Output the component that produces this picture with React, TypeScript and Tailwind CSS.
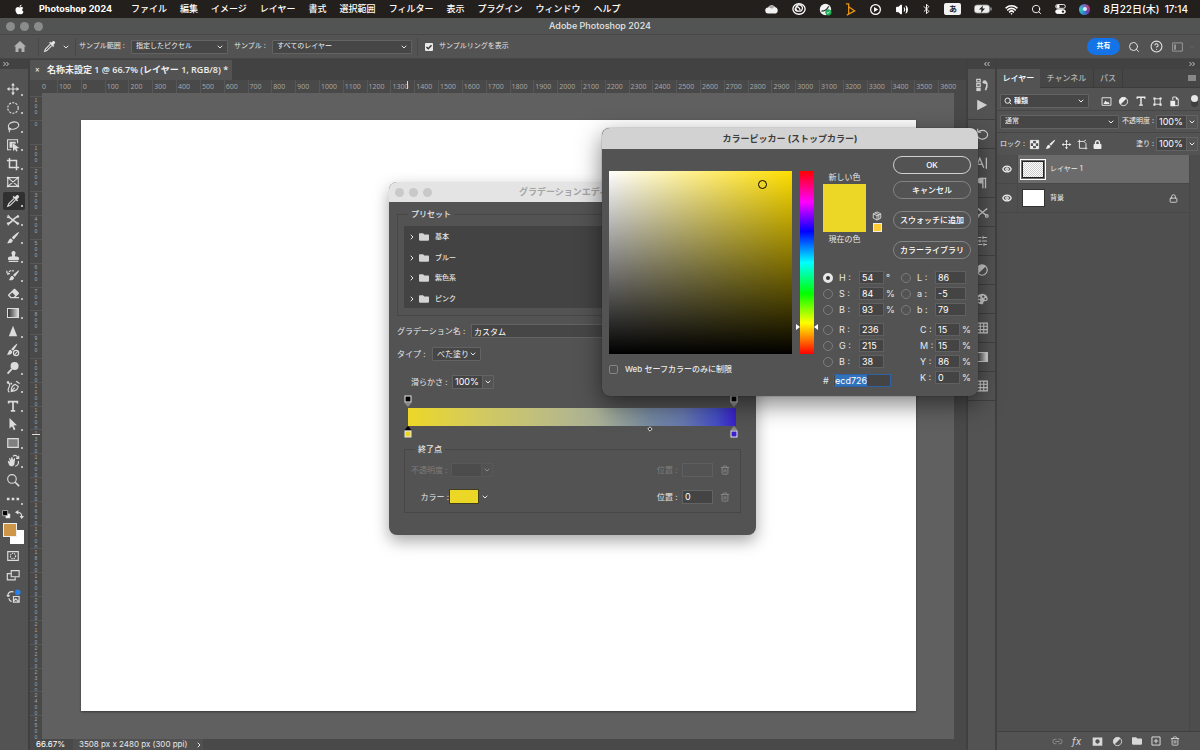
import React, { useEffect, useRef } from 'react';
import {
  Bluetooth,
  ChevronDown,
  ChevronRight,
  CircleHelp,
  Eye,
  Link2,
  Lock,
  Search,
  SlidersHorizontal,
  Trash2,
  Volume2,
  Wifi,
} from 'lucide-react';
import { FaApple, FaFolder, FaStamp, FaEraser, FaLock } from 'react-icons/fa';

const menus = [
  'ファイル',
  '編集',
  'イメージ',
  'レイヤー',
  '書式',
  '選択範囲',
  'フィルター',
  '表示',
  'プラグイン',
  'ウィンドウ',
  'ヘルプ',
];

const topTicks = [100, ...Array.from({ length: 37 }, (_, i) => i * 100)];
const sideTicks = [100, ...Array.from({ length: 26 }, (_, i) => i * 100)];
const presets = ['基本', 'ブルー', '紫色系', 'ピンク'];

interface GlyphProps {
  children: React.ReactNode;
  className?: string;
}

// Stroke icon on a 16 unit grid
function Glyph({ children, className = 'w-[14px] h-[14px]' }: GlyphProps) {
  return (
    <svg viewBox="0 0 16 16" className={`shrink-0 ${className}`} fill="none" stroke="currentColor" strokeWidth="1.3" aria-hidden="true">
      {children}
    </svg>
  );
}

const MoveIcon = ({ className }: { className?: string }) => (
  <Glyph className={className}>
    <path d="M8 2v12M2 8h12" />
    <path d="M8 1 5.800 4h4.400zM8 15l-2.200-3h4.400zM1 8l3-2.200v4.400zM15 8l-3-2.200v4.400z" fill="currentColor" stroke="none" />
  </Glyph>
);

const PipetteIcon = ({ className }: { className?: string }) => (
  <Glyph className={className}>
    <path d="M9 5.200 3 11.200 2 14l2.800-1 6-6" />
    <path d="M7.500 3.300 12.700 8.500l1.200-1.200-1.200-1.200 1.800-1.900c1.500-1.500-1-4.100-2.600-2.600L10 3.400 8.700 2.100z" fill="currentColor" stroke="none" />
  </Glyph>
);

const BrushIcon = ({ className }: { className?: string }) => (
  <Glyph className={className}>
    <path d="M14.800 1.200c.6.6-4.200 6.900-6 8.500L6.600 7.600C8.300 5.600 14.200.6 14.800 1.200zM5.700 8.500l2.100 2.100C7.800 13.500 4 14.800 1 13.700c2-.6 1.600-5 4.700-5.200z" fill="currentColor" stroke="none" />
  </Glyph>
);

const HalfCircleIcon = ({ className }: { className?: string }) => (
  <Glyph className={className}>
    <circle cx="8" cy="8" r="6" />
    <path d="M3.700 12.300A6 6 0 0 1 12.300 3.700z" fill="currentColor" stroke="none" />
  </Glyph>
);

const TypeIcon = ({ className }: { className?: string }) => (
  <Glyph className={className}>
    <path d="M3 5V3h10v2M8 3v10.500M5.500 13.500h5" strokeWidth="1.900" />
  </Glyph>
);

const FrameIcon = ({ className }: { className?: string }) => (
  <Glyph className={className}>
    <path d="M4 4h8v8H4z" />
    <path d="M2 2h3v3H2zM11 2h3v3h-3zM2 11h3v3H2zM11 11h3v3h-3z" fill="currentColor" stroke="none" />
  </Glyph>
);

const tools = [
  { name: '移動', icon: <MoveIcon />, more: true },
  { name: '楕円形選択', icon: <Glyph><circle cx="8" cy="8" r="6" strokeDasharray="2.400 1.400" /></Glyph>, more: true },
  {
    name: 'なげなわ',
    icon: <Glyph><ellipse cx="8.500" cy="6.500" rx="6" ry="4" transform="rotate(-14 8 6)" /><path d="M3.800 9.200c-1.600 1-.6 2.600.8 1.800 1.300-.9-.4-2.300-1-1.200M4 11c.5 1 .3 2-.5 3" /></Glyph>,
    more: true,
  },
  {
    name: 'オブジェクト選択',
    icon: <Glyph><path d="M6 13.500H1.800V2h11.400v4" strokeWidth="1.200" /><path d="M4 4.200h7v2.600L7.500 5.600V11H4zM8 6l7.200 5.400-3.200.5 1.300 3-1.700.6-1.300-3L8 15z" fill="currentColor" stroke="none" /></Glyph>,
    more: true,
  },
  { name: '切り抜き', icon: <Glyph><path d="M4 1v11h11M1 4h11v11" strokeWidth="1.700" /></Glyph>, more: true },
  { name: 'フレーム', icon: <Glyph><path d="M2 3h12v10H2zM2 3l12 10M14 3 2 13" /><path d="M1 2h2v2H1zM13 2h2v2h-2zM1 12h2v2H1zM13 12h2v2h-2z" fill="currentColor" stroke="none" /></Glyph>, more: false },
  { name: 'スポイト', icon: <PipetteIcon />, more: true },
  {
    name: 'スポット修復',
    icon: <Glyph><path d="M1 4.500c3 0 4 1 7 3.500s4 4 7 4M1 12c4 0 5-1.500 7-4s4-4 7-4" strokeWidth="1.800" /><path d="M2 2.500 4.500 5M11.500 11l2.500 2.500M2 14l2.500-3M11.500 5.500 14 2.500" strokeWidth="1.400" /></Glyph>,
    more: true,
  },
  { name: 'ブラシ', icon: <BrushIcon />, more: true },
  { name: 'コピースタンプ', icon: <FaStamp className="w-[11px] h-[11px]" />, more: true },
  { name: 'ヒストリーブラシ', icon: <Glyph><path d="M15 2.500c.5.500-3.500 6-5 7.500l-2-2c1.500-1.600 6.500-6 7-5.500zM7.200 8.800l2 2c0 2.700-3.200 4-6.200 3 1.900-.6 1.500-4.800 4.200-5z" fill="currentColor" stroke="none" /><path d="M2 8c0-4.500 4-6 7-4.500M1 3v3.500h3.500" strokeDasharray="3 1" /></Glyph>, more: true },
  { name: '消しゴム', icon: <FaEraser className="w-[11px] h-[11px]" />, more: true },
  { name: 'グラデーション', icon: <span className="w-3 h-[10px] border border-[#dcdcdc] bg-linear-to-r from-[#3a3a3a] to-[#d8d8d8]" />, more: true },
  { name: 'シャープ', icon: <Glyph><path d="M8 2 12.800 14H3.200z" fill="currentColor" stroke="none" /></Glyph>, more: true },
  { name: '調整ブラシ', icon: <Glyph><path d="M13 .8c.5.5-3.500 6.500-5 8L6 7C7.500 5 12.500.3 13 .8zM5.200 7.800l2 2C7.200 13 4 14 1 13c1.900-.6 1.500-5 4.200-5.200z" fill="currentColor" stroke="none" /><circle cx="11.500" cy="11.500" r="3" /><path d="m9.500 13.500 4-4" /></Glyph>, more: false },
  { name: '覆い焼き', icon: <Glyph><circle cx="9.800" cy="5.800" r="4.600" fill="currentColor" stroke="none" /><path d="M6.500 9.300 1.800 14.500" strokeWidth="2" /></Glyph>, more: true },
  {
    name: 'ペン',
    icon: <Glyph><path d="M6 13c0-4 1.500-7 4.500-8l3.500 2.500c-.5 3-3 5-8 5.500zM6 13l4-4.200M11.500 1.500 15.500 4M2 3c2 1 3 2 1.500 5S2 13 4 14" /><path d="M1 1.500h2.500V4H1zM5 3h2v2H5z" fill="currentColor" stroke="none" /></Glyph>,
    more: true,
  },
  { name: '文字', icon: <TypeIcon />, more: true },
  { name: 'パス選択', icon: <Glyph><path d="M4 1l8.500 8.500-3.800.3 2.100 4.300-1.900.9-2-4.400L4 13z" fill="currentColor" stroke="none" /></Glyph>, more: true },
  { name: '長方形', icon: <Glyph><path d="M2 3h12v10H2z" fill="#808080" /></Glyph>, more: true },
  {
    name: '手のひら',
    icon: <Glyph><path d="M2 8.500c1-1 2 0 2.500 1L3.500 5c.8-1 1.600 0 2 2L6 4c1-.8 1.700 0 1.700 1l.3 2 1-2c1-.5 1.600.3 1.300 1.300L9.500 12c-1 2.500-4.500 2.800-6 .5z" fill="currentColor" stroke="none" /><path d="M8 2.500c3-2 5.500 0 5 2.500M14 8c1 3-1 5.500-3.500 6M11.500 5H14.500V2" /></Glyph>,
    more: true,
  },
  { name: 'ズーム', icon: <Glyph><circle cx="6.800" cy="6.800" r="4.900" /><path d="m10.500 10.500 4.500 4.500" strokeWidth="1.800" /></Glyph>, more: false },
  { name: 'ツールバーを編集', icon: <Glyph><path d="M1 6.500h3v3H1zM6.500 6.500h3v3h-3zM12 6.500h3v3h-3z" fill="currentColor" stroke="none" /></Glyph>, more: true },
];

interface DropProps {
  label: string;
  value: string;
  className?: string;
  selectClass?: string;
}

// Native select with the chevron laid in the same grid cell
function Drop({ label, value, className = '', selectClass = 'pl-1' }: DropProps) {
  return (
    <span className={`grid items-center bg-[#464646] border border-[#636363] rounded-[1px] ${className}`}>
      <select aria-label={label} defaultValue={value} className={`[grid-area:1/1] h-full w-full appearance-none outline-none text-[#f0f0f0] ${selectClass}`}>
        <option value={value}>{value}</option>
      </select>
      <ChevronDown className="[grid-area:1/1] justify-self-end mr-[3px] w-2 h-2 pointer-events-none" strokeWidth={3} />
    </span>
  );
}

function PercentBox({ label, value, disabled = false }: { label: string; value: string; disabled?: boolean }) {
  return (
    <span className={`flex h-[14px] ${disabled ? 'opacity-40' : ''}`}>
      <input aria-label={label} defaultValue={value} disabled={disabled} className="w-[31px] px-[2px] border border-[#636363] bg-[#444] text-[9px] text-white outline-none" />
      <button type="button" aria-label={`${label}を変更`} disabled={disabled} className="w-[11px] flex items-center justify-center border border-l-0 border-[#636363]">
        <ChevronDown className="w-2 h-2" strokeWidth={3} />
      </button>
    </span>
  );
}

function MenuBar() {
  return (
    <header className="h-[18px] shrink-0 bg-[#231f1d] text-white flex items-center justify-between pl-[14px] pr-3 text-[9px] font-medium">
      <div className="flex items-center">
        <FaApple className="w-[11px] h-[11px]" />
        <span className="ml-[14px] w-[77px] font-bold">Photoshop 2024</span>
        <nav className="ml-[15px] flex gap-[13px] whitespace-nowrap">
          {menus.map((menu) => (
            <button key={menu} type="button">{menu}</button>
          ))}
        </nav>
      </div>
      <div className="flex items-center gap-[13px]">
        <svg viewBox="0 0 28 20" className="w-[14px] h-[10px]" aria-hidden="true">
          <path d="M7 19a6 6 0 0 1-1-12 8 8 0 0 1 14-1 7 7 0 0 1 2 13z" fill="#f2f2f2" />
          <path d="M6 7a8 8 0 0 1 14-1c-3 0-5 2-6 4-2-2-5-3-8-3z" fill="#aaa" />
        </svg>
        <Glyph>
          <ellipse cx="8" cy="8" rx="7" ry="6" strokeWidth="1.500" />
          <path d="M10.500 10.500H6A2.400 2.400 0 1 1 7.800 6.500L9.500 9M6.500 10.500A3.800 3.800 0 1 1 9.800 10.500" strokeWidth="1.400" />
        </Glyph>
        <svg viewBox="0 0 16 16" className="w-[13px] h-[13px]" aria-hidden="true">
          <circle cx="8" cy="8" r="7" fill="#f4f4f4" />
          <circle cx="11.500" cy="11.500" r="3.800" fill="#1fae54" />
          <path d="M3 10c4 0 7-2 9-6" stroke="#333" strokeWidth="1.500" fill="none" />
          <path d="m9.800 11.500 1.300 1.300 2.200-2.400" stroke="#fff" fill="none" />
        </svg>
        <svg viewBox="0 0 11 14" className="w-[11px] h-[13px]" fill="none" stroke="#e8930c" strokeWidth="1.400" aria-hidden="true">
          <path d="M.5 1h3v11M3.500 4l6.500 4.500L1.500 13M3.500 12V7" />
        </svg>
        <Glyph className="w-[13px] h-[13px]">
          <circle cx="8" cy="8" r="6" strokeWidth="1.500" />
          <path d="M6.200 5v6l5-3z" fill="currentColor" stroke="none" />
        </Glyph>
        <Volume2 className="w-[14px] h-[13px] fill-white" strokeWidth={2} />
        <Bluetooth className="w-[9px] h-3 scale-125" strokeWidth={2} />
        <span className="w-[17px] h-3 rounded-[2px] bg-[#f2f2f2] text-[#222] text-[8px] leading-3 text-center font-bold">あ</span>
        <svg viewBox="0 0 36 20" className="w-[18px] h-[10px]" aria-hidden="true">
          <rect x="1" y="2" width="30" height="16" rx="5" fill="#eee" stroke="#999" strokeWidth="1.500" />
          <path d="M34 7v6" stroke="#aaa" strokeWidth="2.500" />
          <path d="m18 3-8 8h5l-1 7 8-9h-5z" fill="#231f1d" />
        </svg>
        <Wifi className="w-[13px] h-[13px]" strokeWidth={3} />
        <Search className="w-[11px] h-[11px]" strokeWidth={2} />
        <Glyph className="w-[11px] h-[12px]">
          <rect x="1" y="1.500" width="14" height="5.500" rx="2.700" />
          <rect x="1" y="9" width="14" height="5.500" rx="2.700" fill="currentColor" />
          <circle cx="4.500" cy="4.200" r="2.300" fill="currentColor" stroke="none" />
          <circle cx="11.500" cy="11.800" r="1.700" fill="#231f1d" stroke="none" />
        </Glyph>
        <span className="w-[11px] h-[11px] rounded-full bg-[conic-gradient(from_200deg,#2a8fd0,#39c0b8,#5d7ad8,#c23a7b,#6a3fb0,#2a8fd0)] flex items-center justify-center">
          <span className="w-1 h-1 rounded-full bg-[#d8ecff]" />
        </span>
        <time className="text-[10px] whitespace-nowrap">8月22日(木)&nbsp; 17:14</time>
      </div>
    </header>
  );
}

function OptionsBar() {
  return (
    <div className="h-6 shrink-0 flex items-center pl-[14px] pr-1 border-b border-[#464646] text-[7px] text-[#e4e4e4] whitespace-nowrap">
      <button type="button" aria-label="ホーム">
        <svg viewBox="0 0 24 22" className="w-3 h-[11px] fill-[#b0b0b0]" aria-hidden="true">
          <path d="M12 0 24 11h-3v11h-6v-7H9v7H3V11H0z" />
        </svg>
      </button>
      <div className="ml-3 h-[18px] border-l border-r border-[#484848] flex items-center pl-1 pr-[5px] gap-[6px]">
        <PipetteIcon className="w-[13px] h-[13px]" />
        <ChevronDown className="w-2 h-2" strokeWidth={3} />
      </div>
      <span className="ml-[3px] w-12">サンプル範囲 :</span>
      <Drop label="サンプル範囲" value="指定したピクセル" className="ml-1 w-[97px] h-[14px]" />
      <span className="ml-[6px] w-[34px]">サンプル :</span>
      <Drop label="サンプル" value="すべてのレイヤー" className="ml-1 w-[140px] h-[14px]" />
      <label className="ml-[5px] h-[18px] border-l border-[#484848] pl-[7px] flex items-center gap-[6px]">
        <span className="grid">
          <input type="checkbox" defaultChecked className="[grid-area:1/1] appearance-none w-2 h-2 rounded-[1px] bg-[#e8e8e8]" />
          <Glyph className="[grid-area:1/1] w-2 h-2 text-[#333] pointer-events-none">
            <path d="m3 8 3.500 3.500L13 4.500" strokeWidth="2.800" />
          </Glyph>
        </span>
        サンプルリングを表示
      </label>
      <div className="ml-auto flex items-center">
        <button type="button" className="w-[33px] h-[17px] rounded-full bg-[#1473e6] text-white font-bold">共有</button>
        <button type="button" aria-label="検索" className="ml-2"><Search className="w-3 h-3" /></button>
        <button type="button" aria-label="ヘルプ" className="ml-[10px]"><CircleHelp className="w-[13px] h-[13px]" /></button>
        <button type="button" aria-label="ワークスペース" className="ml-2 flex items-center gap-1 text-[#999]">
          <Glyph className="w-[13px] h-3">
            <path d="M1.500 2.500h13v11h-13z" />
            <path d="M3.500 4.500h2.500v7H3.500z" fill="currentColor" stroke="none" />
          </Glyph>
          <ChevronDown className="w-2 h-2 text-[#6a6a6a]" />
        </button>
      </div>
    </div>
  );
}

function Collapse({ left = false }: { left?: boolean }) {
  return (
    <svg viewBox="0 0 12 8" className={`w-[6px] h-1 ${left ? 'rotate-180' : ''}`} fill="none" stroke="#c8c8c8" strokeWidth="2" aria-hidden="true">
      <path d="m1 0 4 4-4 4M7 0l4 4-4 4" />
    </svg>
  );
}

function Toolbar() {
  return (
    <aside className="w-[30px] shrink-0 border-r-2 border-[#404040] flex flex-col">
      <div className="h-[10px] shrink-0 bg-[#424242] pl-[3px] flex items-center"><Collapse /></div>
      <div className="pt-[11px] flex flex-col text-[#dcdcdc]">
        <div className="h-[428px] grid auto-rows-fr">
          {tools.map((tool) => (
            <button
              key={tool.name}
              type="button"
              title={tool.name}
              className={`mx-[3px] flex items-center rounded-[2px] pl-[3px] ${tool.name === 'スポイト' ? 'bg-[#303030]' : ''}`}
            >
              <span className="w-[14px] flex justify-center">{tool.icon}</span>
              {tool.more && <span className="self-end ml-px mb-[3px] w-[2px] h-[2px] bg-[#bbb]" />}
            </button>
          ))}
        </div>
        <div className="h-[13px] flex items-center justify-between pl-[2px] pr-1">
          <Glyph className="w-[9px] h-[9px]">
            <path d="M7 7h7v7H7z" fill="#fff" />
            <path d="M1 1h9v9H1z" fill="#000" stroke="#ccc" />
          </Glyph>
          <Glyph className="w-[9px] h-[9px]">
            <path d="M4 4c6 0 8 2 8 8" strokeWidth="2" />
            <path d="M0 4 6 0v8zM12 16 8 10.500h8z" fill="currentColor" stroke="none" />
          </Glyph>
        </div>
        {/* Foreground and background colors */}
        <div className="h-[23px] pl-[3px] pt-[2px] grid grid-cols-[7px_7px_7px] grid-rows-[7px_7px_7px]">
          <span className="col-start-2 col-span-2 row-start-2 row-span-2 bg-white" />
          <span className="col-start-1 col-span-2 row-start-1 row-span-2 bg-[#cd9648] border border-[#eee]" />
        </div>
        <div className="pt-[5px] pl-[6px] flex flex-col">
          <Glyph>
            <path d="M2 3h12v10H2z" />
            <circle cx="8" cy="8" r="3" strokeDasharray="1.500 1" />
          </Glyph>
          <Glyph className="mt-[5px] w-[14px] h-[14px]">
            <path d="M6 3h9v7H6z" />
            <path d="M5.500 6.500H1.500v7h9V10.500" />
          </Glyph>
          <Glyph className="mt-[7px] w-[15px] h-[15px]">
            <path d="M8 3C4 2 1.500 4.500 2 8l-1-1.500M2 8l2-1M3 10c.5 2 1.500 3 3 3.500M8 8h6v6H8zM8 13l2.500-2.500L14 14" />
            <circle cx="12.500" cy="3.500" r="3" fill="#2680eb" stroke="none" />
          </Glyph>
        </div>
      </div>
    </aside>
  );
}

function DocumentArea() {
  return (
    <main className="flex-1 min-w-0 flex flex-col">
      <div className="h-[21px] shrink-0 bg-[#424242] flex">
        <div className="w-[202px] h-5 mt-px bg-[#535353] flex items-center pl-[5px] text-[9px] leading-3 font-semibold text-[#efefef] whitespace-nowrap font-['Open_Sans','Noto_Sans_CJK_JP',sans-serif]">
          <button type="button" aria-label="閉じる" className="w-3 text-left text-[8px] leading-3">×</button>
          名称未設定 1 @ 66.7% (レイヤー 1, RGB/8) *
        </div>
      </div>
      <div className="relative h-[13px] shrink-0 flex bg-[#494949] text-[7px] leading-[13px] text-[#a8a8a8] font-['Open_Sans',sans-serif] overflow-hidden">
        <span className="w-3 shrink-0" />
        <span className="w-[15px] shrink-0">0</span>
        <div className="flex-1 grid grid-flow-col auto-cols-fr">
          {topTicks.map((tick, i) => (
            <span key={i} className="border-l border-[#575757] pl-px whitespace-nowrap">{tick}</span>
          ))}
        </div>
        <span className="w-1 shrink-0" />
        <span className="absolute left-[377px] top-px w-px h-2 bg-[#ddd]" />
      </div>
      <div className="flex-1 min-h-0 flex bg-[#494949]">
        <div className="relative w-3 shrink-0 pt-[3px] grid auto-rows-fr text-[5px] leading-[6px] text-[#a8a8a8] font-['Liberation_Sans',sans-serif]">
          {sideTicks.map((tick, i) => (
            <span key={i} className="min-h-0 pl-[3px] border-t border-[#575757] whitespace-nowrap [writing-mode:vertical-lr] [text-orientation:upright]">
              {tick}
            </span>
          ))}
          <span className="absolute left-[2px] top-[341px] w-2 h-px bg-[#ddd]" />
        </div>
        <div className="flex-1 bg-[#606060] pt-[27px] pb-7 pl-[39px] pr-[38px] flex">
          <div className="flex-1 bg-white shadow-[0_1px_2px_#3a3a3a]" />
        </div>
        <div className="w-3 shrink-0" />
      </div>
      <footer className="h-[11px] shrink-0 bg-[#494949] flex items-center text-[8px] leading-[11px] text-[#e6e6e6] whitespace-nowrap">
        <span className="w-[43px] pl-[6px] text-white">66.67%</span>
        <span className="bg-[#505050] w-[130px] pl-[6px] flex items-center justify-between">
          3508 px x 2480 px (300 ppi)
          <ChevronRight className="w-2 h-2" strokeWidth={3} />
        </span>
      </footer>
    </main>
  );
}

const GridIcon = () => (
  <Glyph><path d="M2 2.500h12v11H2zM6 2.500v11M10 2.500v11M2 6h12M2 9.800h12" /></Glyph>
);

const dock = [
  [
    <Glyph key="history"><path d="M2 1.500h4v3H2zM2 6.500h4v3H2z" /><path d="M1.500 11h5v4h-5z" fill="currentColor" stroke="none" /><path d="M9 4c5-1 6 4 3 10" strokeWidth="1.800" /><path d="M8 5.500 12 2l.5 5z" fill="currentColor" stroke="none" /></Glyph>,
    <Glyph key="actions"><path d="M2.500 2v12L14 8z" fill="currentColor" stroke="none" /></Glyph>,
  ],
  [<Glyph key="clone"><path d="M3 2v4h4M3.500 6a6 5 0 1 1-.5 5" /></Glyph>],
  [
    <Glyph key="char"><path d="M1 13.500 5.500 2.500 10 13.500M2.600 9.500h5.800M13 2v12.500" strokeWidth="1.500" /></Glyph>,
    <Glyph key="para"><path d="M9 14V2.500M12 14V2.500M13 2.700H6" strokeWidth="1.500" /><path d="M9 2H6a3 3 0 0 0 0 6.500h3z" fill="currentColor" stroke="none" /></Glyph>,
  ],
  [<Glyph key="tools"><path d="m2 3 11 9M14 4 4 12" strokeWidth="1.700" /><circle cx="3" cy="12.500" r="1.500" /><circle cx="13.500" cy="12.500" r="1.500" /></Glyph>],
  [<SlidersHorizontal key="props" className="w-3 h-3" />],
  [<HalfCircleIcon key="adjust" />],
  [
    <Glyph key="color">
      <path
        d="M8 2a6.500 6 0 1 0 0 12c2 0 1-2 2-3s4.500 0 4.500-3C14.500 4.500 11.500 2 8 2zM5 5.500a1.300 1.300 0 1 0 .01 0zM9.500 4a1.300 1.300 0 1 0 .01 0zM4.800 9.200a1.300 1.300 0 1 0 .01 0zM12 6.800a1.200 1.200 0 1 0 .01 0z"
        fill="currentColor"
        fillRule="evenodd"
        stroke="none"
      />
    </Glyph>,
  ],
  [<GridIcon key="swatches" />],
  [<span key="gradients" className="w-3 h-[10px] border border-[#ccc] bg-linear-to-r from-[#444] to-[#ddd]" />],
  [<GridIcon key="patterns" />],
];

function Dock() {
  return (
    <aside className="w-[31px] shrink-0 bg-[#404040] px-[2px] text-[#cfcfcf]">
      <div className="h-[10px] bg-[#424242] flex items-center justify-end pr-[5px]"><Collapse left /></div>
      <div className="h-full bg-[#535353] pt-[2px]">
        {dock.map((group, i) => (
          <div key={i} className={`flex flex-col items-center justify-center gap-[6px] border-b border-[#404040] ${group.length > 1 ? 'h-[49px]' : 'h-[29px]'}`}>
            {group}
          </div>
        ))}
      </div>
    </aside>
  );
}

interface LayerRowProps {
  name: string;
  selected?: boolean;
  locked?: boolean;
  children: React.ReactNode;
}

function LayerRow({ name, selected = false, locked = false, children }: LayerRowProps) {
  return (
    <li className="h-[29px] flex border-b border-[#484848]">
      <button type="button" aria-label="表示" className="w-[21px] flex items-center justify-center border-r border-[#484848]">
        <Eye className="w-[10px] h-[10px]" strokeWidth={3} />
      </button>
      <div className={`flex-1 flex items-center pl-[2px] pr-[11px] ${selected ? 'bg-[#6b6b6b]' : ''}`}>
        <span className="w-[26px] mr-1 flex justify-center">{children}</span>
        {name}
        {locked && <Lock className="ml-auto w-[9px] h-[9px]" />}
      </div>
    </li>
  );
}

function LayersPanel() {
  return (
    <aside className="w-[203px] shrink-0 flex flex-col text-[7px] text-[#ededed] whitespace-nowrap">
      <div className="h-[10px] bg-[#424242] flex items-center justify-end pr-[5px]"><Collapse /></div>
      <div className="h-[19px] bg-[#464646] flex text-[8px] leading-[10px] font-medium text-[#b4b4b4]">
        <button type="button" className="w-[43px] pb-px bg-[#535353] text-white">レイヤー</button>
        <button type="button" className="w-[54px] border-r border-b border-[#3c3c3c]">チャンネル</button>
        <button type="button" className="w-[29px] border-r border-b border-[#3c3c3c]">パス</button>
        <span className="flex-1 border-b border-[#3c3c3c] flex items-center justify-end pr-1">
          <span className="w-2 h-[6px] bg-[#888]" />
        </span>
      </div>
      <div className="h-[23px] border-b border-[#464646] flex items-center pt-1 pl-[3px] pr-[2px]">
        <span className="grid items-center">
          <Drop label="種類" value="種類" className="[grid-area:1/1] w-[89px] h-[14px] font-bold" selectClass="pl-[13px]" />
          <Search className="[grid-area:1/1] ml-1 w-2 h-2 pointer-events-none" strokeWidth={3} />
        </span>
        <div className="flex-1 flex items-center justify-between pl-3 pr-[11px]">
          <Glyph className="w-[11px] h-[11px]">
            <path d="M1.500 2.500h13v11h-13z" />
            <path d="m3.500 11.500 3-5 2.500 3 1.500-1.500 2 3.500z" fill="currentColor" stroke="none" />
          </Glyph>
          <HalfCircleIcon className="w-[11px] h-[11px]" />
          <TypeIcon className="w-3 h-3" />
          <FrameIcon className="w-[11px] h-[11px]" />
          <Glyph className="w-[11px] h-[11px]">
            <path d="M5.500 6V1.500h5l3 3v9.500H8" />
            <path d="M2 7h7v8H2zM10 1v4h4z" fill="currentColor" stroke="none" />
          </Glyph>
        </div>
        <span className="w-[7px] h-3 rounded-full bg-[#3e3e3e]">
          <span className="block w-[7px] h-[7px] rounded-full bg-[#e8e8e8]" />
        </span>
      </div>
      <div className="h-[22px] border-b border-[#464646] flex items-center pl-[3px] pr-[2px]">
        <Drop label="描画モード" value="通常" className="w-[119px] h-[14px]" />
        <span className="ml-auto mr-[2px]">不透明度 :</span>
        <PercentBox label="不透明度" value="100%" />
      </div>
      <div className="h-[22px] flex items-center pl-[3px] pr-[2px]">
        <span>ロック :</span>
        <div className="ml-1 flex items-center gap-[5px]">
          <Glyph className="w-[11px] h-[11px]">
            <path d="M2 2h12v12H2z" />
            <path d="M2 2h4v4H2zM10 2h4v4h-4zM6 6h4v4H6zM2 10h4v4H2zM10 10h4v4h-4z" fill="currentColor" stroke="none" />
          </Glyph>
          <BrushIcon className="w-[11px] h-[11px]" />
          <MoveIcon className="w-[11px] h-[11px]" />
          <Glyph className="w-[11px] h-[11px]">
            <path d="M3.500 1v12.500H15M1 3.500h9l3 3V15M10 3.500l3-2" />
          </Glyph>
          <FaLock className="w-[9px] h-[9px]" />
        </div>
        <span className="ml-auto mr-[2px]">塗り :</span>
        <PercentBox label="塗り" value="100%" />
      </div>
      <div className="flex-1 flex bg-[#4f4f4f]">
        <ul className="flex-1">
          <LayerRow name="レイヤー 1" selected>
            <span className="w-[26px] h-[21px] border border-white p-px">
              <span className="block h-full border border-[#222] bg-[conic-gradient(#ccc_25%,#fff_0_50%,#ccc_0_75%,#fff_0)] bg-[length:2px_2px]" />
            </span>
          </LayerRow>
          <LayerRow name="背景" locked>
            <span className="w-[23px] h-[18px] bg-white border border-[#333]" />
          </LayerRow>
        </ul>
        <span className="w-[11px] border-l border-[#484848] bg-[#4d4d4d]" />
      </div>
      <footer className="h-[19px] border-t border-[#404040] flex items-center justify-end gap-[9px] pr-5 text-[#d8d8d8]">
        <Link2 className="w-[11px] h-[11px] text-[#909090]" />
        <span className="w-[11px] text-[10px] leading-[11px] italic">fx</span>
        <Glyph className="w-[11px] h-[11px]">
          <path d="M1 2h14v12H1zM8 4.800a3.200 3.200 0 1 0 .01 0z" fill="currentColor" fillRule="evenodd" stroke="none" />
        </Glyph>
        <HalfCircleIcon className="w-[11px] h-[11px]" />
        <FaFolder className="w-[10px] h-[10px]" />
        <Glyph className="w-[10px] h-[10px]">
          <path d="M1.500 1.500h13v13h-13zM8 4.500v7M4.500 8h7" strokeWidth="1.600" />
        </Glyph>
        <Trash2 className="w-[10px] h-[10px]" />
      </footer>
    </aside>
  );
}

function Stop({ color, tip, flip = false }: { color: string; tip: string; flip?: boolean }) {
  return (
    <svg viewBox="0 0 8 12" className={`w-2 h-3 ${flip ? 'rotate-180' : ''}`} aria-hidden="true">
      <path d="M.5 8 4 12 7.500 8z" fill={tip} />
      <rect x="1" y="1" width="6" height="6" fill={color} stroke="#e8e8e8" strokeWidth="1" />
    </svg>
  );
}

function GradientEditor() {
  return (
    <section aria-label="グラデーションエディター" className="absolute left-[389px] top-[182px] w-[367px] rounded-lg overflow-clip bg-[#535353] text-[8px] text-[#e6e6e6] shadow-[0_6px_16px_rgba(0,0,0,0.35)] whitespace-nowrap">
      <div className="h-5 bg-[#e4e4e4] flex items-center pl-[6px]">
        <div className="w-[43px] flex gap-[5px]">
          <span className="w-[9px] h-[9px] rounded-full bg-[#c9c9c9]" />
          <span className="w-[9px] h-[9px] rounded-full bg-[#c9c9c9]" />
          <span className="w-[9px] h-[9px] rounded-full bg-[#c9c9c9]" />
        </div>
        <h2 className="flex-1 pr-[49px] text-center text-[9px] font-bold text-[#a5a5a5]">グラデーションエディター</h2>
      </div>
      <div className="px-2 pt-2 pb-[22px]">
        <fieldset className="w-[270px] h-[106px] border border-[#474747] px-[6px] pt-[7px]">
          <legend className="ml-1 px-[3px] leading-[9px] font-medium">プリセット</legend>
          <ul className="h-[82px] bg-[#434343] grid auto-rows-fr text-[7px]">
            {presets.map((preset) => (
              <li key={preset} className="flex items-center pt-[2px] pl-1">
                <ChevronRight className="w-2 h-2" strokeWidth={3} />
                <FaFolder className="ml-[3px] w-[10px] h-[10px] text-[#d4d4d4]" />
                <span className="ml-[6px] font-medium">{preset}</span>
              </li>
            ))}
          </ul>
        </fieldset>
        <label className="mt-2 h-[14px] flex items-center gap-[6px]">
          <span className="w-[68px]">グラデーション名 :</span>
          <input defaultValue="カスタム" className="w-[190px] h-[14px] px-[2px] leading-3 bg-[#464646] border border-[#636363] text-white outline-none" />
        </label>
        <div className="mt-[9px] flex items-center">
          <span className="w-[35px]">タイプ :</span>
          <Drop label="タイプ" value="べた塗り" className="w-[49px] h-[14px]" />
        </div>
        <div className="mt-[14px] pl-[14px] flex items-center">
          <span className="w-[41px]">滑らかさ :</span>
          <PercentBox label="滑らかさ" value="100%" />
        </div>
        <div className="mt-[6px] pl-[11px] pr-3">
          <div className="h-[13px] -ml-[4px] -mr-[2px] flex justify-between">
            <Stop color="#000" tip="#888" />
            <Stop color="#000" tip="#888" />
          </div>
          <div className="h-[18px] bg-[linear-gradient(to_right,#ecd726,#d5cb5c_20%,#bdbd82_42%,#a9b096_58%,#74889f_74%,#6678ad_84%,#444fc4_94%,#3a1fcb)]" />
          <div className="h-[13px] -ml-[4px] -mr-[2px] flex justify-between">
            <Stop color="#ecd726" tip="#000" flip />
            <svg viewBox="0 0 6 6" className="ml-[158px] w-[6px] h-[6px] fill-[#333] stroke-[#ddd]" aria-hidden="true">
              <path d="M3 .8 5.200 3 3 5.200.8 3z" />
            </svg>
            <Stop color="#3a1fcb" tip="#888" flip />
          </div>
        </div>
        <fieldset className="mt-[6px] ml-[7px] mr-[7px] h-[68px] border border-[#474747] pl-[6px] pr-[10px] pt-[9px]">
          <legend className="ml-1 px-[3px] leading-[9px] font-medium">終了点</legend>
          <div className="h-[14px] flex items-center">
            <span className="w-10 text-[#7d7d7d]">不透明度 :</span>
            <PercentBox label="終了点の不透明度" value="" disabled />
            <label className="ml-auto flex items-center text-[#7d7d7d]">
              <span className="w-[25px]">位置 :</span>
              <input disabled className="w-[31px] h-[14px] border border-[#5f5f5f]" />
            </label>
            <Trash2 className="ml-[7px] w-[10px] h-[10px] text-[#8d8d8d]" />
          </div>
          <div className="mt-3 h-[15px] flex items-center">
            <span className="w-[38px] text-right">カラー :</span>
            <button type="button" aria-label="カラー" className="w-[30px] h-[15px] bg-[#ecd726] border border-[#3f3f20]" />
            <ChevronDown className="ml-[2px] w-2 h-2" strokeWidth={3} />
            <label className="ml-auto flex items-center">
              <span className="w-[25px]">位置 :</span>
              <input defaultValue="0" className="w-[31px] h-[14px] px-[2px] bg-[#444] border border-[#636363] text-[9px] text-white outline-none" />
            </label>
            <Trash2 className="ml-[7px] w-[10px] h-[10px] text-[#8d8d8d]" />
          </div>
        </fieldset>
      </div>
    </section>
  );
}

interface ValueFieldProps {
  name: string;
  value: string;
  unit?: string;
  radio?: boolean;
  checked?: boolean;
  wide?: boolean;
}

function ValueField({ name, value, unit = '', radio = true, checked = false, wide = false }: ValueFieldProps) {
  const labelWidth = !radio ? 'w-[15px]' : wide ? 'w-[18px]' : 'w-5';

  return (
    <div className="h-[13px] flex items-center">
      {radio && (
        <input
          type="radio"
          name="channel"
          aria-label={name}
          defaultChecked={checked}
          className="mr-[6px] w-[10px] h-[10px] shrink-0 appearance-none rounded-full border border-[#7c7c7c] checked:border-[3px] checked:border-[#e8e8e8] checked:bg-[#333]"
        />
      )}
      <label className="flex items-center">
        <span className={labelWidth}>{name} :</span>
        <input defaultValue={value} className={`h-[13px] px-[2px] bg-[#444] border border-[#606060] text-white outline-none ${wide ? 'w-[31px]' : 'w-[25px]'}`} />
      </label>
      {unit && <span className="ml-[2px]">{unit}</span>}
    </div>
  );
}

function PickerButton({ children, main = false }: { children: React.ReactNode; main?: boolean }) {
  return (
    <button type="button" className={`w-[78px] h-[18px] rounded-full border text-[8px] leading-[10px] font-medium text-white ${main ? 'border-[#d0d0d0]' : 'border-[#838383]'}`}>
      {children}
    </button>
  );
}

function ColorPicker() {
  const hexRef = useRef<HTMLInputElement>(null);

  useEffect(() => {
    hexRef.current?.focus();
    hexRef.current?.select();
  }, []);

  return (
    <section aria-label="カラーピッカー" className="absolute left-[602px] top-[128px] w-[376px] h-[268px] rounded-lg bg-[#535353] text-[#e8e8e8] text-[9px] shadow-[0_8px_24px_rgba(0,0,0,0.5),0_0_1px_#222] whitespace-nowrap">
      <h2 className="h-[21px] rounded-t-lg bg-[#d2d2d2] text-[#3c3c3c] text-center leading-[21px] font-bold">カラーピッカー (ストップカラー)</h2>
      <div className="flex px-[7px]">
        <div className="pt-[22px]">
          <div className="relative w-[183px] h-[183px] bg-[linear-gradient(to_top,#000,transparent),linear-gradient(to_right,#fff,#ffde00)]">
            <span className="absolute left-[149px] top-[9px] w-[9px] h-[9px] rounded-full border border-black" />
          </div>
          <label className="mt-[10px] flex items-center gap-[7px] text-[8px] leading-[10px] font-medium">
            <input type="checkbox" className="appearance-none w-[9px] h-[9px] rounded-[2px] border border-[#858585]" />
            Web セーフカラーのみに制限
          </label>
        </div>
        <div className="pt-[22px] px-2">
          <div className="relative w-[14px] h-[183px] bg-[linear-gradient(to_bottom,#f00,#f0f_17%,#00f_33%,#0ff_50%,#0f0_67%,#ff0_83%,#f00)]">
            <svg viewBox="0 0 24 6" className="absolute -left-[5px] top-[153px] w-6 h-[6px] fill-white" aria-hidden="true">
              <path d="M1 0 5 3 1 6zM23 0 19 3 23 6z" />
            </svg>
          </div>
        </div>
        <div className="flex-1 ml-px pt-[7px]">
          <div className="flex justify-between">
            <div className="w-[60px] pt-4 text-[8px] leading-[10px]">
              <p className="w-[43px] text-center">新しい色</p>
              <div className="my-[2px] flex items-end gap-[6px]">
                <span className="w-[43px] h-12 bg-[#ecd726]" />
                <span className="flex flex-col items-center gap-[2px]">
                  <Glyph className="w-[10px] h-[10px]">
                    <path d="M8 1.500 14 4.500v7L8 14.500 2 11.500v-7zM2 4.500l6 3 6-3M8 7.500v7M5 3l6 3v7" />
                  </Glyph>
                  <button type="button" aria-label="Web セーフカラー" className="w-[9px] h-[9px] bg-[#fc3] border border-[#eee]" />
                </span>
              </div>
              <p className="w-[43px] text-center">現在の色</p>
            </div>
            <div className="flex flex-col">
              <PickerButton main>OK</PickerButton>
              <div className="mt-[7px] flex flex-col gap-3">
                <PickerButton>キャンセル</PickerButton>
                <PickerButton>スウォッチに追加</PickerButton>
                <PickerButton>カラーライブラリ</PickerButton>
              </div>
            </div>
          </div>
          <div className="mt-3 grid grid-cols-[78px_70px] gap-y-[7px]">
            <div className="flex flex-col gap-[3px]">
              <ValueField name="H" value="54" unit="°" checked />
              <ValueField name="S" value="84" unit="%" />
              <ValueField name="B" value="93" unit="%" />
            </div>
            <div className="flex flex-col gap-[3px]">
              <ValueField name="L" value="86" wide />
              <ValueField name="a" value="-5" wide />
              <ValueField name="b" value="79" wide />
            </div>
            <div className="flex flex-col gap-[3px]">
              <ValueField name="R" value="236" />
              <ValueField name="G" value="215" />
              <ValueField name="B" value="38" />
              <label className="mt-[3px] h-[13px] flex items-center gap-1">
                <span className="w-[6px]">#</span>
                <input ref={hexRef} defaultValue="ecd726" className="w-[58px] h-[13px] px-px bg-[#444] border border-[#2f62a5] text-white outline-none selection:bg-[#3172bd] selection:text-white" />
              </label>
            </div>
            <div className="flex flex-col gap-[3px] pl-[19px]">
              <ValueField name="C" value="15" unit="%" radio={false} />
              <ValueField name="M" value="15" unit="%" radio={false} />
              <ValueField name="Y" value="86" unit="%" radio={false} />
              <ValueField name="K" value="0" unit="%" radio={false} />
            </div>
          </div>
        </div>
      </div>
    </section>
  );
}

export default function App() {
  return (
    <div lang="ja" className="relative h-screen overflow-hidden flex flex-col bg-[#535353] text-[#e4e4e4] font-['Inter','Noto_Sans_CJK_JP',sans-serif]">
      <MenuBar />
      <div className="h-[17px] shrink-0 bg-[#515453] border-b border-[#474747] flex items-center pl-[6px]">
        <div className="w-[37px] flex gap-[5px]">
          <span className="w-[9px] h-[9px] rounded-full bg-[#8b8b8b]" />
          <span className="w-[9px] h-[9px] rounded-full bg-[#8b8b8b]" />
          <span className="w-[9px] h-[9px] rounded-full bg-[#8b8b8b]" />
        </div>
        <h1 className="flex-1 pr-[43px] text-center text-[9px] font-medium">Adobe Photoshop 2024</h1>
      </div>
      <OptionsBar />
      <div className="flex-1 min-h-0 flex overflow-hidden">
        <Toolbar />
        <DocumentArea />
        <Dock />
        <LayersPanel />
      </div>
      <GradientEditor />
      <ColorPicker />
    </div>
  );
}
